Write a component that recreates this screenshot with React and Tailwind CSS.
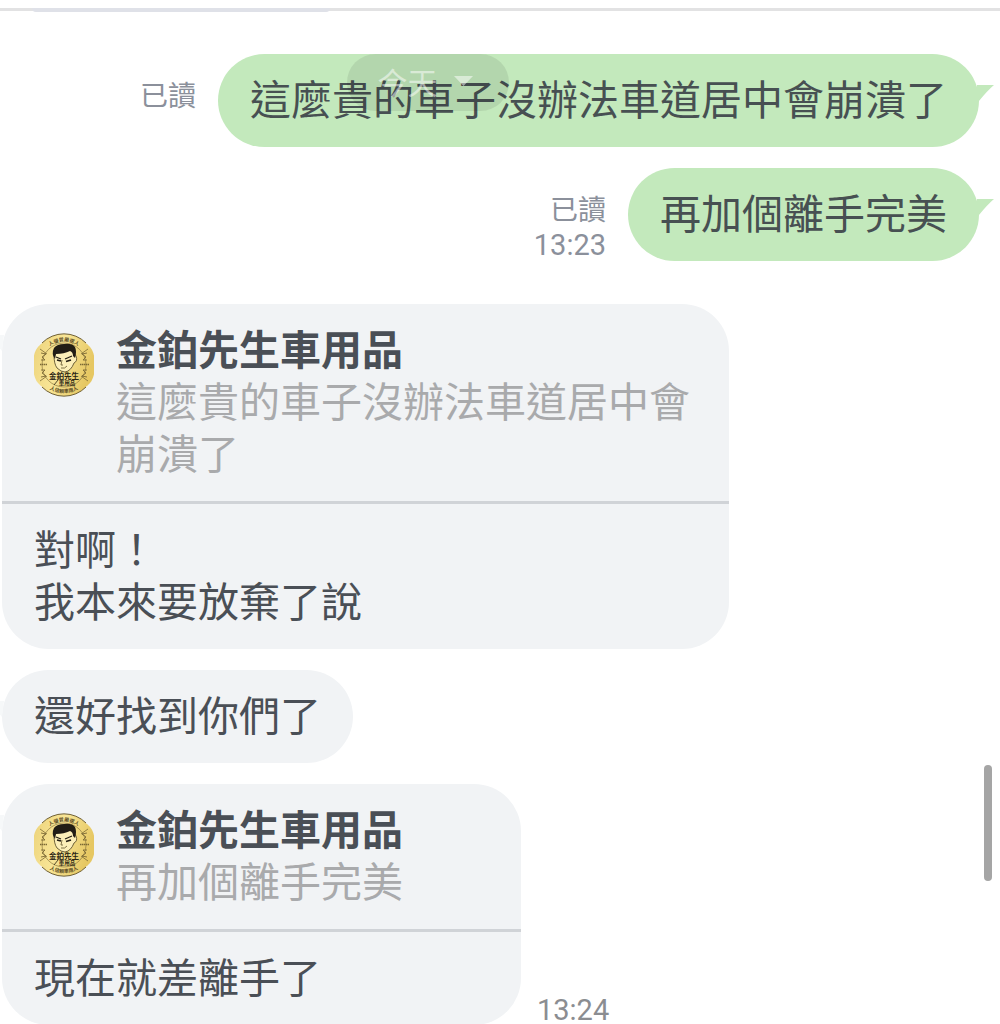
const sentMessages = [
  { id: 1, text: '這麼貴的車子沒辦法車道居中會崩潰了', read: true },
  { id: 2, text: '再加個離手完美', read: true, time: '13:23' },
];

const receivedMessages = [
  {
    id: 3,
    quote: '這麼貴的車子沒辦法車道居中會崩潰了',
    lines: ['對啊！', '我本來要放棄了說'],
  },
  { id: 4, lines: ['還好找到你們了'] },
  { id: 5, quote: '再加個離手完美', lines: ['現在就差離手了'], time: '13:24' },
];

const SHOP_NAME = '金鉑先生車用品';

const ShopAvatar = ({ id }) => (
  <svg viewBox="0 0 60 64" className="mt-3 h-16 w-[60px] shrink-0" role="img" aria-label={SHOP_NAME}>
    <defs>
      <linearGradient id={`gold-${id}`} x1="0" x2="1" y1="0" y2="0.3">
        <stop offset="0" stopColor="#ecd279" />
        <stop offset="0.5" stopColor="#f8e596" />
        <stop offset="1" stopColor="#e6c762" />
      </linearGradient>
      <path id={`top-${id}`} d="M6.5 32 A23.5 23.5 0 0 1 53.5 32" />
      <path id={`bottom-${id}`} d="M2 32 A28 28 0 0 0 58 32" />
    </defs>
    <path d="M0 23 Q1 16 7 11 H53 Q59 16 60 23 V41 Q59 48 53 53 H7 Q1 48 0 41Z" fill={`url(#gold-${id})`} />
    <circle cx="30" cy="32" r="31" fill={`url(#gold-${id})`} />
    <path d="M8 10 A31 31 0 0 1 52 10 M8 54 A31 31 0 0 0 52 54" fill="none" stroke="#6f5f33" strokeWidth="1" />
    <circle cx="30" cy="32" r="22" fill="none" stroke="#8b783f" strokeWidth="0.7" />
    <path d="M6 16 l7 5 M54 16 l-7 5 M6 48 l7 -5 M54 48 l-7 -5" stroke="#7b6935" strokeWidth="0.8" />
    <g fill="none" stroke="#7b6935" strokeWidth="0.9">
      <path d="M7 20 l5 1 l-4 3 l3 3 l-4 0 M53 20 l-5 1 l4 3 l-3 3 l4 0" />
      <path d="M7 44 l5 -1 l-4 -3 l3 -3 l-4 0 M53 44 l-5 -1 l4 -3 l-3 -3 l4 0" />
      <path d="M6 31.5 h7 M46 31.5 h9" strokeWidth="1.7" strokeDasharray="1.4 0.5" />
    </g>
    <g fill="#5c4d25" fontFamily='"Noto Sans CJK TC", sans-serif' fontSize="5" fontWeight="700" textAnchor="middle">
      <text>
        <textPath href={`#top-${id}`} startOffset="50%">人優質嚴選人</textPath>
      </text>
      <text>
        <textPath href={`#bottom-${id}`} startOffset="50%">人信賴車用人</textPath>
      </text>
    </g>
    {/* face */}
    <path d="M20 22 Q20 31 23 35 Q27 39 31 39 Q37 38 40 30 Q44 28 42 23 L39 18 Q29 14 20 22Z" fill="#fcefb8" stroke="#4b401f" strokeWidth="0.8" />
    <path d="M21 26 Q17 21 20 15 Q23 11 30 11 Q38 10 41 14 Q43 18 41 25 L39 23 Q39 19 36 18 Q30 21 22 21Z" fill="#211d15" />
    <path d="M22 24 l5 2 M31 26 l7 -3" stroke="#221d13" strokeWidth="1.2" />
    <path d="M23 27 l4 1 M32 28.5 l5 -1.5" stroke="#221d13" strokeWidth="1.8" />
    <path d="M28 27 l-1 5 l2 0 M27 35 q4 1 6 -2" fill="none" stroke="#61532c" strokeWidth="0.8" />
    <g fill="#2c2614" fontFamily='"Noto Sans CJK TC", sans-serif' fontWeight="700" textAnchor="middle">
      <text x="30" y="45.5" fontSize="7.5">金鉑先生</text>
      <text x="33" y="51.5" fontSize="5.5">車用品</text>
    </g>
    <path d="M20 52 l4 -5" stroke="#2c2614" strokeWidth="0.8" />
  </svg>
);

const SentTail = () => (
  <svg viewBox="0 0 18 18" className="absolute top-[30px] -right-4 size-[18px]" aria-hidden="true">
    <path d="M0 1 H17 Q10 7 2 17 L0 18Z" fill="#c3e9bc" />
  </svg>
);

const ReceivedTail = () => (
  <svg viewBox="0 0 18 18" className="absolute top-[30px] -left-4 size-[18px]" aria-hidden="true">
    <path d="M18 1 H1 Q8 7 16 17Z" fill="#f6f8f9" />
  </svg>
);

const SentMessage = ({ message }) => (
  <li className="flex items-start justify-end gap-[22px]">
    <div className="mt-[22px] shrink-0 text-right leading-[37px] text-[#8b909b]">
      {message.read && <p className="text-[28px]">已讀</p>}
      {message.time && <time className="block font-[Roboto] text-[29px]">{message.time}</time>}
    </div>
    <p className="relative rounded-[47px] bg-[#c3e9bc] px-8 pt-[17px] pb-6 text-[41px] leading-[52px] text-[#475052]">
      {message.text}
      <SentTail />
    </p>
  </li>
);

const ReceivedMessage = ({ message }) => (
  <li className="flex items-end gap-4">
    {message.quote ? (
      <article className="relative max-w-[727px] min-w-[519px] rounded-[47px] bg-[#f1f3f5] text-[41px] leading-[52px]">
        <div className="flex gap-[22px] border-b-3 border-[#d0d3d7] px-8 pt-[17px] pb-6">
          <ShopAvatar id={message.id} />
          <div>
            <h2 className="font-bold text-[#4a4f56]">{SHOP_NAME}</h2>
            <blockquote className="text-[#a9aaac]">{message.quote}</blockquote>
          </div>
        </div>
        <div className="px-8 pt-[17px] pb-6 text-[#4a4f56]">
          {message.lines.map((line) => (
            <p key={line}>{line}</p>
          ))}
        </div>
        <ReceivedTail />
      </article>
    ) : (
      <p className="relative rounded-[47px] bg-[#f1f3f5] px-8 pt-[17px] pb-6 text-[41px] leading-[52px] text-[#4a4f56]">
        {message.lines[0]}
        <ReceivedTail />
      </p>
    )}
    {message.time && <time className="font-[Roboto] text-[29px] leading-[30px] text-[#8b8d91]">{message.time}</time>}
  </li>
);

const App = () => {
  return (
    <main
      lang="zh-Hant"
      className="relative h-screen overflow-hidden bg-white font-['Noto_Sans_CJK_TC',sans-serif]"
    >
      <header className="pt-2">
        <div className="h-[3px] bg-[#e2e2e3]">
          <div className="ml-8 h-1 w-[298px] rounded-b-full bg-[#dfe1e8]" />
        </div>
      </header>

      <ul className="mt-[43px] flex flex-col gap-[21px] pr-[21px]">
        {sentMessages.map((message) => (
          <SentMessage key={message.id} message={message} />
        ))}
      </ul>

      <ul className="mt-10 flex flex-col gap-[21px] pl-[2px]">
        {receivedMessages.map((message) => (
          <ReceivedMessage key={message.id} message={message} />
        ))}
      </ul>

      {/* floating date label */}
      <button
        type="button"
        className="absolute top-[54px] left-[347px] flex h-[57px] w-[162px] items-center justify-center gap-4 rounded-full bg-black/8 pr-1.5 pb-1 text-[30px] leading-[30px] text-white/50"
      >
        今天
        <svg viewBox="0 0 19 10" className="h-[10px] w-[19px]" aria-hidden="true">
          <path d="M0 0 H19 L9.5 10Z" fill="currentColor" />
        </svg>
      </button>

      <div className="absolute top-[765px] right-2 h-[116px] w-2 rounded-full bg-[#a5a5a5]" />
    </main>
  );
};

export default App;
